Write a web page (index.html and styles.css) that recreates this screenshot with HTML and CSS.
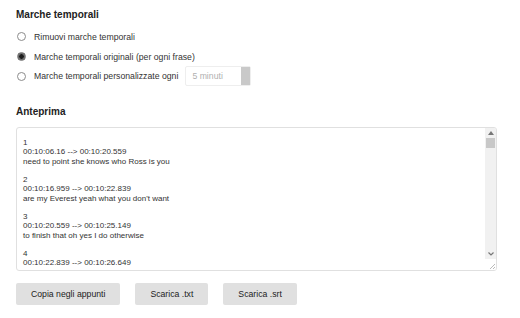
FILE: index.html
```html
<!DOCTYPE html>
<html lang="it">
<head>
  <meta charset="UTF-8" />
  <meta name="viewport" content="width=device-width, initial-scale=1.0" />
  <title>Marche temporali</title>
  <link rel="stylesheet" href="styles.css">
</head>
<body>
  <div class="panel">
    <h2>Marche temporali</h2>

    <div class="options">
      <label class="option"><span class="radio"></span>Rimuovi marche temporali</label>
      <label class="option"><span class="radio checked"></span>Marche temporali originali (per ogni frase)</label>
      <label class="option">
        <span class="radio"></span>Marche temporali personalizzate ogni
        <span class="select"><span class="select-text">5 minuti</span><span class="select-btn"></span></span>
      </label>
    </div>

    <h2 class="preview-title">Anteprima</h2>

    <div class="preview">
      <div class="preview-text">1
00:10:06.16 --&gt; 00:10:20.559
need to point she knows who Ross is you

2
00:10:16.959 --&gt; 00:10:22.839
are my Everest yeah what you don't want

3
00:10:20.559 --&gt; 00:10:25.149
to finish that oh yes I do otherwise

4
00:10:22.839 --&gt; 00:10:26.649</div>
      <div class="scrollbar">
        <span class="sb-btn">
          <svg width="6" height="4" viewBox="0 0 6 4"><polygon points="0,4 3,0 6,4" fill="#777"/></svg>
        </span>
        <span class="sb-thumb"></span>
        <span class="sb-track"></span>
        <span class="sb-btn">
          <svg width="6" height="4" viewBox="0 0 6 4"><polyline points="0.5,0.5 3,3 5.5,0.5" fill="none" stroke="#777" stroke-width="1.2"/></svg>
        </span>
        <span class="sb-corner">
          <svg width="6" height="6" viewBox="0 0 6 6"><path d="M6 1 L1 6 M6 4 L4 6" stroke="#aaa" stroke-width="0.8"/></svg>
        </span>
      </div>
    </div>

    <div class="actions">
      <button type="button">Copia negli appunti</button>
      <button type="button">Scarica .txt</button>
      <button type="button">Scarica .srt</button>
    </div>
  </div>
</body>
</html>
```

FILE: styles.css
```css
body {
  margin: 0;
  background: #fff;
  font-family: "Liberation Sans", Arial, sans-serif;
  color: #333;
}
.panel {
  padding: 9px 23px 0 16px;
}
h2 {
  margin: 0;
  font-size: 10px;
  line-height: 12px;
  font-weight: bold;
  color: #222;
}
.options {
  margin-top: 6px;
}
.option {
  display: flex;
  align-items: center;
  height: 19.7px;
  font-size: 8.7px;
  color: #333;
}
.radio {
  width: 7px;
  height: 7px;
  margin: 0 8px 0 1px;
  border: 1px solid #8c8c8c;
  border-radius: 50%;
  background: #fff;
  flex-shrink: 0;
}
.radio.checked {
  background: radial-gradient(circle, #1e1e1e 0 2px, #6d6d6d 2.5px);
  border-color: #777;
}
.select {
  display: flex;
  align-items: stretch;
  width: 66px;
  height: 20px;
  margin-left: 7px;
  border: 1px solid #eee;
  border-radius: 2px;
  box-sizing: border-box;
}
.select-text {
  flex: 1;
  display: flex;
  align-items: center;
  padding-left: 6px;
  color: #b0b0b0;
}
.select-btn {
  width: 9px;
  background: #c9c9c9;
}
.preview-title {
  margin-top: 20px;
}
.preview {
  display: flex;
  margin-top: 9px;
  height: 144px;
  border: 1px solid #e0e0e0;
  border-radius: 3px;
  box-sizing: border-box;
  overflow: hidden;
}
.preview-text {
  flex: 1;
  padding: 10px 6px 0;
  white-space: pre-line;
  font-size: 8px;
  line-height: 9.25px;
  color: #333;
}
.scrollbar {
  display: flex;
  flex-direction: column;
  width: 11px;
  background: #f1f1f1;
}
.sb-btn, .sb-corner {
  display: flex;
  align-items: center;
  justify-content: center;
  height: 10px;
}
.sb-thumb {
  height: 10px;
  margin: 0 1px;
  background: #c8c8c8;
}
.sb-track {
  flex: 1;
}
.sb-corner {
  background: #fff;
  align-items: flex-end;
  justify-content: flex-end;
  padding: 0 1px 1px 0;
}
.actions {
  display: flex;
  gap: 15px;
  margin-top: 12px;
}
button {
  height: 22px;
  padding: 0 15px;
  font-family: inherit;
  font-size: 8.7px;
  color: #222;
  background: #e0e0e0;
  border: none;
  border-radius: 2px;
}
```
